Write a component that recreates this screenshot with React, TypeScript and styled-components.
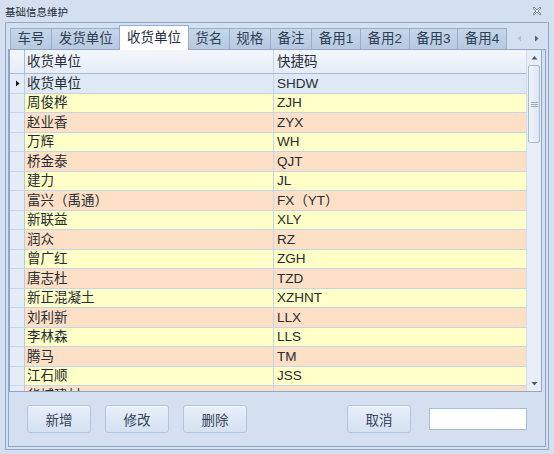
import styled, { createGlobalStyle } from 'styled-components'

const GlobalStyle = createGlobalStyle`
  html, body {
    margin: 0;
    padding: 0;
    background: #d4e0ef;
  }
  * {
    box-sizing: border-box;
  }
`

const FONT = `"Liberation Sans", "Noto Sans CJK SC", sans-serif`

const Janela = styled.div`
  width: 554px;
  height: 454px;
  display: flex;
  flex-direction: column;
  background: #d4e0ef;
  font-family: ${FONT};
  overflow: hidden;
`

const BarraTitulo = styled.div`
  height: 22px;
  display: flex;
  align-items: center;
  justify-content: space-between;
  padding: 0 12px 0 5px;
  font-size: 10.5px;
  color: #1c2a3a;
`

const Moldura = styled.div`
  margin: 0 5px;
  height: 428px;
  border: 1px solid #8fa7c6;
  display: flex;
  flex-direction: column;
  padding: 0 2px 2px 2px;
`

const Abas = styled.div`
  height: 26px;
  display: flex;
  align-items: flex-end;
  padding-left: 3px;
`

const Aba = styled.div<{ $ativa?: boolean }>`
  height: ${(p) => (p.$ativa ? '25px' : '21px')};
  margin-left: -1px;
  margin-bottom: ${(p) => (p.$ativa ? '-1px' : '0')};
  padding: 0 6.6px;
  display: flex;
  align-items: center;
  border: 1px solid #98aecb;
  border-bottom: 0;
  background: ${(p) => (p.$ativa ? '#ffffff' : 'linear-gradient(#c6d6ea, #b6c9e1)')};
  color: ${(p) => (p.$ativa ? '#1f2d3f' : '#2e3e54')};
  font-size: 13.5px;
  line-height: 18px;
  position: relative;
  z-index: ${(p) => (p.$ativa ? 1 : 0)};
  white-space: nowrap;
`

const SetasAbas = styled.div`
  margin-left: auto;
  align-self: center;
  display: flex;
  gap: 10px;
  padding: 4px 6px 0 0;
`

const PaginaAba = styled.div`
  flex: 1;
  border: 1px solid #8fa7c6;
  display: flex;
  flex-direction: column;
`

const Grade = styled.div`
  width: 533px;
  height: 342px;
  border: 1px solid #8fa7c6;
  border-top: 0;
  display: flex;
  background: #ffffff;
`

const CorpoGrade = styled.div`
  flex: 1;
  display: flex;
  flex-direction: column;
  overflow: hidden;
`

const Linha = styled.div<{ $tipo: 'cabecalho' | 'atual' | 'par' | 'impar' }>`
  flex: none;
  display: grid;
  grid-template-columns: 15px 249px 1fr;
  height: ${(p) => (p.$tipo === 'cabecalho' ? '24px' : '19.5px')};
  border-bottom: 1px solid ${(p) => (p.$tipo === 'cabecalho' ? '#a7bbd5' : '#c4d5eb')};
  background: ${(p) =>
    p.$tipo === 'cabecalho'
      ? 'linear-gradient(#f3f7fc, #e6edf7)'
      : p.$tipo === 'atual'
        ? '#dfe8f5'
        : p.$tipo === 'par'
          ? '#fde0c6'
          : '#ffffc8'};
  font-size: 13.5px;
  color: #262c33;
`

const CabecaLinha = styled.div<{ $cabecalho?: boolean }>`
  border-right: 1px solid ${(p) => (p.$cabecalho ? '#a7bbd5' : '#b9cbe3')};
  background: ${(p) => (p.$cabecalho ? 'transparent' : '#e4ecf7')};
  display: flex;
  align-items: center;
  justify-content: center;
`

const Celula = styled.div<{ $divisor?: boolean }>`
  display: flex;
  align-items: center;
  padding-left: ${(p) => (p.$divisor ? '2px' : '3px')};
  padding-top: 1px;
  border-right: ${(p) => (p.$divisor ? '1px solid #c4d5eb' : '0')};
  line-height: 18px;
  white-space: nowrap;
  overflow: hidden;
`

const BarraRolagem = styled.div`
  width: 15px;
  display: flex;
  flex-direction: column;
  background: #e8eef7;
  border-left: 1px solid #d3deec;
`

const BotaoSeta = styled.div`
  height: 15px;
  flex: none;
  display: flex;
  align-items: center;
  justify-content: center;
`

const Trilha = styled.div`
  flex: 1;
`

const Polegar = styled.div`
  height: 78px;
  margin: 0 1px;
  border: 1px solid #a9bcd5;
  border-radius: 2px;
  background: linear-gradient(to right, #f1f5fb, #dbe5f2);
  display: flex;
  align-items: center;
  justify-content: center;
`

const BarraBotoes = styled.div`
  display: flex;
  align-items: center;
  padding: 13px 0 0 18px;
`

const GrupoBotoes = styled.div<{ $recuo?: number }>`
  display: flex;
  align-items: center;
  gap: ${(p) => (p.$recuo ? '18px' : '14px')};
  margin-left: ${(p) => p.$recuo ?? 0}px;
`

const Botao = styled.button`
  width: 64px;
  height: 28px;
  border: 1px solid #b4c5da;
  border-radius: 3px;
  background: linear-gradient(#e7eff9, #d6e2f1);
  box-shadow: inset 0 1px 0 #f5f8fc;
  font-family: ${FONT};
  font-size: 13.5px;
  color: #34445a;
  padding: 0;
`

const Campo = styled.input`
  width: 98px;
  height: 22px;
  border: 1px solid #a9bcd4;
  background: #ffffff;
  outline: none;
`

const abas = ['车号', '发货单位', '收货单位', '货名', '规格', '备注', '备用1', '备用2', '备用3', '备用4']

const dados: [string, string][] = [
  ['收货单位', 'SHDW'],
  ['周俊桦', 'ZJH'],
  ['赵业香', 'ZYX'],
  ['万辉', 'WH'],
  ['桥金泰', 'QJT'],
  ['建力', 'JL'],
  ['富兴（禹通）', 'FX（YT）'],
  ['新联益', 'XLY'],
  ['润众', 'RZ'],
  ['曾广红', 'ZGH'],
  ['唐志杜', 'TZD'],
  ['新正混凝土', 'XZHNT'],
  ['刘利新', 'LLX'],
  ['李林森', 'LLS'],
  ['腾马', 'TM'],
  ['江石顺', 'JSS'],
  ['华城建材', 'HCJC'],
]

function IconeFechar() {
  return (
    <svg width="10" height="10" viewBox="0 0 10 10">
      <polygon
        points="1,2 2,1 5,4 8,1 9,2 6,5 9,8 8,9 5,6 2,9 1,8 4,5"
        fill="#ffffff"
        stroke="#6c7c90"
        strokeWidth="0.9"
        strokeLinejoin="round"
      />
    </svg>
  )
}

function Triangulo({ dir, cor }: { dir: 'cima' | 'baixo' | 'esq' | 'dir'; cor: string }) {
  const pontos = {
    cima: '0.5,5.5 3.5,2 6.5,5.5',
    baixo: '0.5,2 3.5,5.5 6.5,2',
    esq: '5,0.5 1.5,3.5 5,6.5',
    dir: '2,0.5 5.5,3.5 2,6.5',
  }[dir]
  return (
    <svg width="7" height="7" viewBox="0 0 7 7">
      <polygon points={pontos} fill={cor} />
    </svg>
  )
}

export default function App() {
  return (
    <>
      <GlobalStyle />
      <Janela>
        <BarraTitulo>
          <span>基础信息维护</span>
          <IconeFechar />
        </BarraTitulo>
        <Moldura>
          <Abas>
            {abas.map((a) => (
              <Aba key={a} $ativa={a === '收货单位'}>
                {a}
              </Aba>
            ))}
            <SetasAbas>
              <Triangulo dir="esq" cor="#b3c1d3" />
              <Triangulo dir="dir" cor="#4f5f74" />
            </SetasAbas>
          </Abas>
          <PaginaAba>
            <Grade>
              <CorpoGrade>
                <Linha $tipo="cabecalho">
                  <CabecaLinha $cabecalho />
                  <Celula $divisor>收货单位</Celula>
                  <Celula>快捷码</Celula>
                </Linha>
                {dados.map(([nome, codigo], i) => (
                  <Linha key={i} $tipo={i === 0 ? 'atual' : i % 2 === 0 ? 'par' : 'impar'}>
                    <CabecaLinha>{i === 0 && <Triangulo dir="dir" cor="#1a1a1a" />}</CabecaLinha>
                    <Celula $divisor>{nome}</Celula>
                    <Celula>{codigo}</Celula>
                  </Linha>
                ))}
              </CorpoGrade>
              <BarraRolagem>
                <BotaoSeta>
                  <Triangulo dir="cima" cor="#4b5b70" />
                </BotaoSeta>
                <Trilha>
                  <Polegar>
                    <svg width="7" height="5" viewBox="0 0 7 5">
                      <path d="M0 0.5H7M0 2.5H7M0 4.5H7" stroke="#97a9c0" strokeWidth="1" />
                    </svg>
                  </Polegar>
                </Trilha>
                <BotaoSeta>
                  <Triangulo dir="baixo" cor="#4b5b70" />
                </BotaoSeta>
              </BarraRolagem>
            </Grade>
            <BarraBotoes>
              <GrupoBotoes>
                <Botao>新增</Botao>
                <Botao>修改</Botao>
                <Botao>删除</Botao>
              </GrupoBotoes>
              <GrupoBotoes $recuo={100}>
                <Botao>取消</Botao>
                <Campo />
              </GrupoBotoes>
            </BarraBotoes>
          </PaginaAba>
        </Moldura>
      </Janela>
    </>
  )
}
